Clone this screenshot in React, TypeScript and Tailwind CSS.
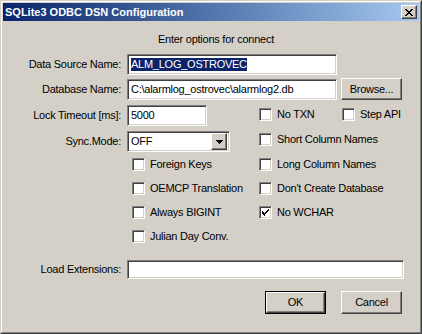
import React from 'react';

const font = "font-['Liberation_Sans',Arial,sans-serif]";

// ── bevels ───────────────────────────────────────────────────────────────────

const sunken =
    'border border-t-[#808080] border-l-[#808080] border-r-white border-b-white shadow-[inset_1px_1px_0_#404040,inset_-1px_-1px_0_#d4d0c8]';
const raised =
    'border border-t-white border-l-white border-r-[#404040] border-b-[#404040] shadow-[inset_-1px_-1px_0_#808080]';

const TextBox = ({ w, h = 21, children }: { w: number; h?: number; children?: React.ReactNode }) => (
    <div
        className={`${sunken} bg-white flex items-center pl-[3px] text-[11px] text-black overflow-hidden whitespace-nowrap`}
        style={{ width: w, height: h }}
    >
        {children}
    </div>
);

const Button = ({ label, w, h, isDefault }: { label: string; w: number; h: number; isDefault?: boolean }) => (
    <div className={isDefault ? 'border border-black' : ''} style={{ width: w, height: h }}>
        <div className={`${raised} bg-[#d4d0c8] h-full flex items-center justify-center text-[11px] text-black`}>
            {label}
        </div>
    </div>
);

const Check = ({ label, checked }: { label: string; checked?: boolean }) => (
    <div className="flex items-center gap-[5px] text-[11px] leading-[13px] text-black whitespace-nowrap">
        <div className={`${sunken} bg-white w-[13px] h-[13px] flex items-center justify-center shrink-0`}>
            {checked && (
                <svg width="7" height="7" viewBox="0 0 7 7" shapeRendering="crispEdges">
                    <path
                        d="M6 0h1v1h-1zM5 1h2v1h-2zM4 2h2v1h-2zM0 2h1v1h-1zM0 3h2v1h-2zM3 3h2v1h-2zM0 4h4v1h-4zM1 5h2v1h-2zM2 6h1v1h-1z"
                        fill="#000"
                    />
                </svg>
            )}
        </div>
        <span>{label}</span>
    </div>
);

const Label = ({ children }: { children: React.ReactNode }) => (
    <div className="w-[119px] text-right text-[11px] text-black pr-[1px] whitespace-nowrap">{children}</div>
);

// ── App ──────────────────────────────────────────────────────────────────────

export default function App() {
    return (
        <div
            className={`${font} tracking-[-0.25px] w-[422px] h-[334px] bg-[#d4d0c8] border border-t-[#d4d0c8] border-l-[#d4d0c8] border-r-[#404040] border-b-[#404040] overflow-hidden`}
        >
            <div className="h-full border border-t-white border-l-white border-r-[#808080] border-b-[#808080] px-[1px] pt-[1px]">
                {/* Title bar */}
                <div className="h-[18px] bg-gradient-to-r from-[#0a246a] to-[#a6caf0] flex items-center justify-between pl-[2px] pr-[2px]">
                    <span className="text-white font-bold text-[11px] tracking-normal">SQLite3 ODBC DSN Configuration</span>
                    <div className={`${raised} bg-[#d4d0c8] w-[16px] h-[14px] flex items-center justify-center`}>
                        <svg width="8" height="7" viewBox="0 0 8 7" shapeRendering="crispEdges">
                            <path
                                d="M0 0h2v1h-2zM6 0h2v1h-2zM1 1h2v1h-2zM5 1h2v1h-2zM2 2h4v1h-4zM3 3h2v1h-2zM2 4h4v1h-4zM1 5h2v1h-2zM5 5h2v1h-2zM0 6h2v1h-2zM6 6h2v1h-2z"
                                fill="#000"
                            />
                        </svg>
                    </div>
                </div>

                <div className="text-[11px] text-black text-center leading-[13px] mt-[12px] pl-[10px]">
                    Enter options for connect
                </div>

                {/* Data source */}
                <div className="flex items-center mt-[8px]">
                    <Label>Data Source Name:</Label>
                    <div className="ml-[5px]">
                        <TextBox w={210}>
                            <span className="bg-[#0a246a] text-white leading-[13px]">ALM_LOG_OSTROVEC</span>
                        </TextBox>
                    </div>
                </div>

                {/* Database */}
                <div className="flex items-center mt-[3px]">
                    <Label>Database Name:</Label>
                    <div className="ml-[5px]">
                        <TextBox w={210}>C:\alarmlog_ostrovec\alarmlog2.db</TextBox>
                    </div>
                    <div className="ml-[4px]">
                        <Button label="Browse..." w={61} h={22} />
                    </div>
                </div>

                {/* Lock timeout */}
                <div className="flex items-center mt-[5px]">
                    <Label>Lock Timeout [ms]:</Label>
                    <div className="ml-[5px]">
                        <TextBox w={80}>5000</TextBox>
                    </div>
                    <div className="ml-[52px] w-[83px] mt-[-3px]">
                        <Check label="No TXN" />
                    </div>
                    <div className="mt-[-3px]">
                        <Check label="Step API" />
                    </div>
                </div>

                {/* Sync mode */}
                <div className="flex items-center mt-[5px]">
                    <Label>Sync.Mode:</Label>
                    <div className="ml-[5px]">
                        <div className={`${sunken} bg-white w-[103px] h-[21px] flex items-center justify-between p-[2px] text-[11px] text-black`}>
                            <span className="pl-[1px]">OFF</span>
                            <div className={`${raised} bg-[#d4d0c8] w-[16px] h-[17px] flex items-center justify-center`}>
                                <svg width="7" height="4" viewBox="0 0 7 4" shapeRendering="crispEdges">
                                    <path d="M0 0h7v1h-7zM1 1h5v1h-5zM2 2h3v1h-3zM3 3h1v1h-1z" fill="#000" />
                                </svg>
                            </div>
                        </div>
                    </div>
                    <div className="ml-[29px] mt-[-4px]">
                        <Check label="Short Column Names" />
                    </div>
                </div>

                {/* Option grid */}
                <div className="grid grid-cols-[127px_1fr] gap-y-[11px] pl-[129px] mt-[6px]">
                    <Check label="Foreign Keys" />
                    <Check label="Long Column Names" />
                    <Check label="OEMCP Translation" />
                    <Check label="Don't Create Database" />
                    <Check label="Always BIGINT" />
                    <Check label="No WCHAR" checked />
                    <Check label="Julian Day Conv." />
                </div>

                {/* Load extensions */}
                <div className="flex items-center mt-[17px]">
                    <Label>Load Extensions:</Label>
                    <div className="ml-[5px]">
                        <TextBox w={277} h={19} />
                    </div>
                </div>

                {/* Buttons */}
                <div className="flex justify-end gap-[15px] mt-[12px] pr-[17px]">
                    <Button label="OK" w={61} h={23} isDefault />
                    <Button label="Cancel" w={61} h={23} />
                </div>
            </div>
        </div>
    );
}
